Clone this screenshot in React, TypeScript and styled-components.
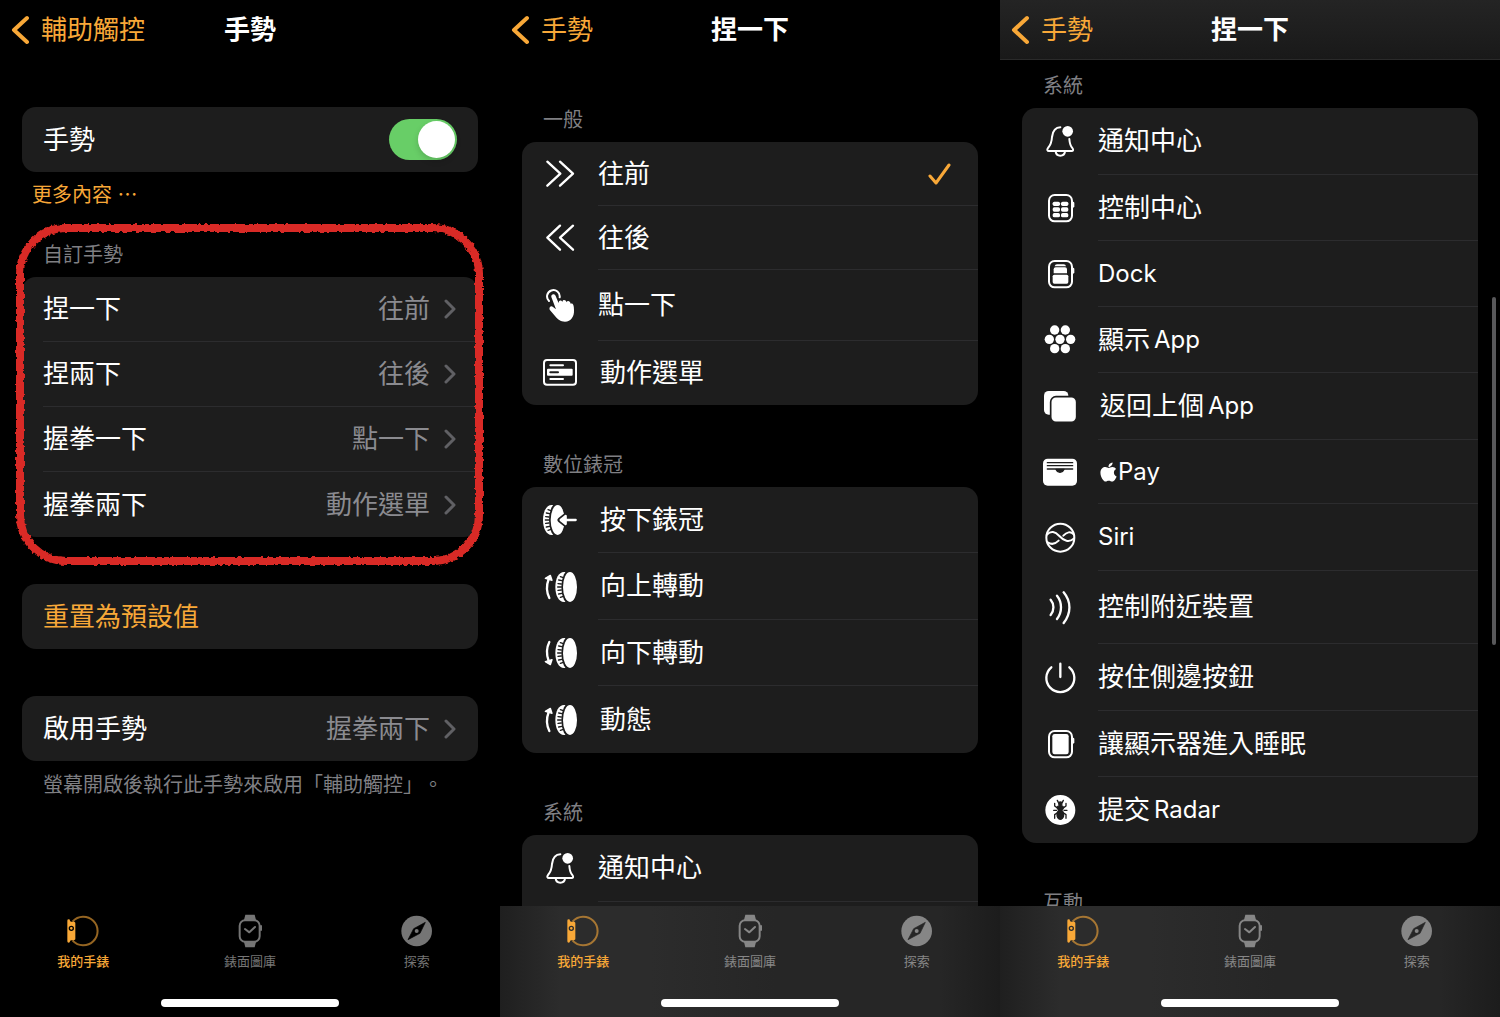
import React, { useState } from "react";
import styled, { createGlobalStyle, css } from "styled-components";
import { FaApple } from "react-icons/fa";

const color = {
  accent: "#f8a838",
  card: "#1d1d1d",
  line: "#2c2c2e",
  muted: "#8b8b90",
  label: "#7f7f83",
  chevron: "#606064",
  green: "#68ce67",
  mark: "#d92b25",
};

const GlobalStyle = createGlobalStyle`
  * { box-sizing: border-box; }
  body {
    margin: 0;
    background: #000;
    color: #fff;
    font-family: Inter, "Noto Sans CJK TC", sans-serif;
    font-size: 26px;
    line-height: 36px;
    text-spacing-trim: space-all;
  }
  button {
    font: inherit;
    color: inherit;
    background: none;
    border: 0;
    padding: 0;
    margin: 0;
    text-align: left;
    cursor: pointer;
  }
  a { color: inherit; text-decoration: none; }
  svg { display: block; flex: none; }
`;

const Screens = styled.main`
  display: grid;
  grid-template-columns: repeat(3, minmax(0, 1fr));
  height: 100vh;
`;

const Phone = styled.section`
  position: relative;
  display: flex;
  flex-direction: column;
  min-height: 0;
  background: #000;
`;

const NavBar = styled.header<{ $raised?: boolean }>`
  flex: none;
  display: grid;
  grid-template-columns: 1fr auto 1fr;
  align-items: center;
  height: 60px;
  padding: 0 11px;
  ${(p) =>
    p.$raised &&
    css`
      background: linear-gradient(#242424, #191919);
      border-bottom: 1px solid #2a2a2a;
    `}
`;

const BackLink = styled.a`
  display: flex;
  align-items: center;
  gap: 12px;
  color: ${color.accent};
`;

const Title = styled.h1`
  margin: 0;
  font-size: 26px;
  line-height: 36px;
  font-weight: 700;
`;

const Content = styled.div<{ $top: number }>`
  flex: 1;
  min-height: 0;
  overflow: hidden;
  padding: ${(p) => p.$top}px 22px 0;
`;

const Card = styled.div<{ $continued?: boolean }>`
  background: ${color.card};
  border-radius: 14px;
  overflow: hidden;
  padding-bottom: ${(p) => (p.$continued ? 40 : 0)}px;
`;

const Spaced = styled.div`
  margin-top: 47px;
`;

const GroupLabel = styled.h2<{ $gap?: number }>`
  margin: ${(p) => p.$gap ?? 46}px 0 8px;
  padding-left: 21px;
  font-size: 20px;
  line-height: 28px;
  font-weight: 400;
  color: ${color.label};
`;

const MoreLink = styled.a`
  display: block;
  width: max-content;
  margin: 9px 0 0 10px;
  font-size: 20px;
  line-height: 28px;
  color: ${color.accent};
`;

const Note = styled.p`
  margin: 10px 0 0;
  padding-left: 21px;
  font-size: 20px;
  line-height: 28px;
  color: ${color.label};
  white-space: nowrap;
`;

const settingRow = css`
  display: flex;
  align-items: center;
  width: 100%;
  height: 65px;
  padding-left: 21px;
`;

const ToggleRow = styled.label`
  ${settingRow}
  justify-content: space-between;
  padding-right: 21px;
`;

const SettingButton = styled.button<{ $accent?: boolean }>`
  ${settingRow}
  color: ${(p) => (p.$accent ? color.accent : "#fff")};
`;

const SettingBody = styled.span`
  flex: 1;
  display: flex;
  align-items: center;
  justify-content: space-between;
  height: 100%;
  padding-right: 21px;
  border-bottom: 1px solid ${color.line};
  button:last-child > & {
    border-bottom: 0;
  }
`;

const Value = styled.span`
  display: flex;
  align-items: center;
  gap: 13px;
  color: ${color.muted};
`;

const Switch = styled.input`
  appearance: none;
  flex: none;
  width: 68px;
  height: 41px;
  margin: 0;
  padding: 2px;
  border-radius: 21px;
  background: #39393d;
  cursor: pointer;
  &::before {
    content: "";
    display: block;
    width: 37px;
    height: 37px;
    border-radius: 50%;
    background: #fff;
    box-shadow: 0 3px 6px rgba(0, 0, 0, 0.15);
  }
  &:checked {
    background: ${color.green};
  }
  &:checked::before {
    margin-left: 27px;
  }
`;

const Marked = styled.section`
  position: relative;
  margin-top: 32px;
`;

const MarkSvg = styled.svg`
  position: absolute;
  inset: -21px -10px -32px;
  width: calc(100% + 20px);
  height: calc(100% + 53px);
  overflow: visible;
  pointer-events: none;
  rect {
    width: calc(100% - 17px);
    height: calc(100% - 16px);
  }
`;

const OptionRow = styled.button<{ $height: number }>`
  display: flex;
  align-items: center;
  width: 100%;
  height: ${(p) => p.$height}px;
  padding-left: 21px;
`;

const IconSlot = styled.span`
  width: 55px;
`;

const OptionBody = styled.span<{ $wide?: boolean; $divider: boolean }>`
  flex: 1;
  display: flex;
  align-items: center;
  justify-content: space-between;
  height: 100%;
  padding: 0 27px 0 ${(p) => (p.$wide ? 2 : 0)}px;
  border-bottom: ${(p) => (p.$divider ? `1px solid ${color.line}` : 0)};
`;

const OptionText = styled.span`
  display: flex;
  align-items: center;
  gap: 4px;
`;

const Latin = styled.span`
  font-size: 24px;
`;

const PayMark = styled.span`
  display: flex;
  align-items: center;
  gap: 1px;
  font-size: 24px;
  svg {
    width: 17px;
    height: 22px;
  }
`;

const TabBar = styled.footer<{ $raised?: boolean }>`
  flex: none;
  display: flex;
  flex-direction: column;
  align-items: center;
  justify-content: space-between;
  height: 111px;
  padding: 8px 0 10px;
  background: ${(p) =>
    p.$raised
      ? "linear-gradient(90deg, #1f1f1f 0, #2c2c2c 12%, #2c2c2c 30%, #262626 55%, #262626 88%, #1c1c1c 100%)"
      : "#000"};
`;

const Tabs = styled.nav`
  display: grid;
  grid-template-columns: repeat(3, 1fr);
  width: 100%;
`;

const Tab = styled.button<{ $active?: boolean; $raised?: boolean }>`
  display: flex;
  flex-direction: column;
  align-items: center;
  gap: 3px;
  font-size: 13px;
  line-height: 20px;
  font-weight: ${(p) => (p.$active ? 500 : 400)};
  color: ${(p) => (p.$active ? color.accent : p.$raised ? "#868686" : "#757575")};
`;

const HomeIndicator = styled.div`
  width: 178px;
  height: 8px;
  border-radius: 4px;
  background: #fff;
`;

const ScrollThumb = styled.div`
  position: absolute;
  top: 297px;
  right: 4px;
  width: 4px;
  height: 348px;
  border-radius: 2px;
  background: #58585a;
`;

/* ---------- icons: a 102-unit square shown at 34px ---------- */

const Glyph = ({ children }: { children: React.ReactNode }) => (
  <svg
    width="34"
    height="34"
    viewBox="0 0 102 102"
    fill="none"
    stroke="#fff"
    strokeWidth="7"
    strokeLinecap="round"
    strokeLinejoin="round"
    aria-hidden="true"
  >
    {children}
  </svg>
);

const Forward = () => (
  <Glyph>
    <path d="M13 14L52 50L13 86M51 14L90 50L51 86" />
  </Glyph>
);

const Backward = () => (
  <Glyph>
    <path d="M51 14L13 50L51 86M90 14L51 50L90 86" />
  </Glyph>
);

const TapHand = () => (
  <Glyph>
    <path d="M18 36A19 19 0 1 1 50 25" strokeWidth="6" />
    <path
      fill="#fff"
      stroke="none"
      d="M25 24C23 15 35 12 38 21L47 43C46 34 54 31 58 39C59 31 68 31 71 40C73 34 81 35 83 44C90 41 93 49 93 63C94 83 84 98 66 98C52 98 44 91 36 81L20 62C17 54 25 49 30 54L39 61Z"
    />
  </Glyph>
);

const ActionMenu = () => (
  <Glyph>
    <rect x="3" y="12" width="96" height="74" rx="9" strokeWidth="6" />
    <path d="M22 28H60M22 69H60" strokeWidth="6" />
    <rect x="12" y="38" width="77" height="21" rx="3" fill="#fff" stroke="none" />
    <path d="M22 49H45" stroke={color.card} strokeWidth="6" />
  </Glyph>
);

const CrownBody = ({ x }: { x: number }) => (
  <g transform={`translate(${x} 0)`} stroke="none">
    <path d="M26 6C10 6 0 26 0 51C0 76 10 96 26 96H36V6Z" fill="#fff" />
    <ellipse cx="44" cy="51" rx="26" ry="53" fill={color.card} />
    <path
      d="M15 20L24 23M10 30L20 32M8 41L18 42M7 51L18 51M8 61L18 60M10 72L20 70M15 82L24 79"
      stroke={color.card}
      strokeWidth="4"
    />
    <ellipse cx="44" cy="51" rx="21" ry="45" fill="#fff" />
  </g>
);

const CrownPress = () => (
  <Glyph>
    <CrownBody x={0} />
    <path d="M51 51L70 36V66ZM68 51H98" stroke={color.card} strokeWidth="15" />
    <path d="M53 51L68 39V63Z" fill="#fff" />
    <path d="M66 51H98" strokeWidth="7" />
  </Glyph>
);

const CrownTurn = ({ down }: { down?: boolean }) => (
  <Glyph>
    <CrownBody x={37} />
    <g transform={down ? "translate(0 102) scale(1 -1)" : undefined}>
      <path d="M19 84C10 66 10 46 17 27" />
      <path d="M7 25L22 16L27 31Z" fill="#fff" strokeWidth="4" />
    </g>
  </Glyph>
);

const CrownUp = () => <CrownTurn />;
const CrownDown = () => <CrownTurn down />;

const Bell = () => (
  <Glyph>
    <path
      d="M52 7C36 7 29 21 27 36C26 54 23 60 15 69C11 74 13 78 18 78H85C91 78 92 74 88 69C81 61 80 56 79 42"
      strokeWidth="6"
    />
    <path d="M38 80C40 96 64 96 66 80" strokeWidth="6" />
    <circle cx="74" cy="19" r="20" fill={color.card} stroke="none" />
    <circle cx="74" cy="19" r="16" fill="#fff" stroke="none" />
  </Glyph>
);

const WatchFrame = ({ children }: { children: React.ReactNode }) => (
  <Glyph>
    <rect x="18" y="12" width="69" height="79" rx="17" strokeWidth="6" />
    <path d="M90 36V46" strokeWidth="8" />
    <g fill="#fff" stroke="none">
      {children}
    </g>
  </Glyph>
);

const ControlCenter = () => (
  <WatchFrame>
    {[32, 49, 66].map((y) => (
      <React.Fragment key={y}>
        <rect x="29" y={y} width="22" height="13" rx="5" />
        <rect x="54" y={y} width="22" height="13" rx="5" />
      </React.Fragment>
    ))}
  </WatchFrame>
);

const DockIcon = () => (
  <WatchFrame>
    <path d="M35 28Q36 22 42 22H62Q68 22 69 28Z" />
    <path d="M32 49V37Q32 31 38 31H66Q72 31 72 37V49Z" />
    <rect x="29" y="53" width="47" height="27" rx="5" />
  </WatchFrame>
);

const DisplaySleep = () => (
  <WatchFrame>
    <rect x="28" y="21" width="49" height="61" rx="7" />
  </WatchFrame>
);

const AppGrid = () => (
  <Glyph>
    <g fill="#fff" stroke="none">
      {[[35, 21], [67, 21], [19, 49], [51, 49], [83, 49], [35, 77], [67, 77]].map(([x, y]) => (
        <circle key={`${x}-${y}`} cx={x} cy={y} r="14" />
      ))}
    </g>
  </Glyph>
);

const PreviousApp = () => (
  <Glyph>
    <rect x="3" y="3" width="73" height="71" rx="14" fill="#fff" stroke="none" />
    <rect x="23" y="20" width="78" height="77" rx="16" fill="#fff" stroke={color.card} strokeWidth="5" />
  </Glyph>
);

const Wallet = () => (
  <Glyph>
    <rect x="0" y="11" width="102" height="81" rx="14" fill="#fff" stroke="none" />
    <g stroke={color.card} strokeWidth="4">
      <path d="M13 23H89M13 32H89M13 42H89" />
      <path d="M39 43Q42 51 51 52Q60 51 63 43Z" fill={color.card} />
    </g>
  </Glyph>
);

const SiriIcon = () => (
  <Glyph>
    <circle cx="52" cy="50" r="42" strokeWidth="6" />
    <path
      d="M12 41C24 28 36 32 49 45C62 59 78 67 93 52M14 64C26 72 37 69 47 59M61 44C71 33 83 30 92 40"
      strokeWidth="6"
    />
  </Glyph>
);

const Nearby = () => (
  <Glyph>
    <path d="M23 26C34 39 34 59 23 72M42 14C58 34 58 64 42 84M62 4C85 32 85 66 62 96" />
  </Glyph>
);

const Power = () => (
  <Glyph>
    <path d="M25 19A42 42 0 1 0 79 19M52 8V48" />
  </Glyph>
);

const Radar = () => (
  <Glyph>
    <circle cx="52" cy="51" r="45" fill="#fff" stroke="none" />
    <g stroke={color.card} strokeWidth="4">
      <ellipse cx="52" cy="65" rx="10" ry="14" fill={color.card} />
      <ellipse cx="52" cy="44" rx="9" ry="6" fill={color.card} />
      <circle cx="52" cy="32" r="5" fill={color.card} />
      <path d="M46 28L43 22M58 28L61 22M42 44L35 39V31M62 44L69 39V31M41 52H32M63 52H72M42 60L35 65V76M62 60L69 65V76" />
    </g>
  </Glyph>
);

const BackChevron = () => (
  <svg width="18" height="30" viewBox="0 0 18 30" fill="none" aria-hidden="true">
    <path d="M16 3L3 15L16 27" stroke={color.accent} strokeWidth="4" strokeLinecap="round" strokeLinejoin="round" />
  </svg>
);

const RowChevron = () => (
  <svg width="14" height="20" viewBox="0 0 14 20" fill="none" aria-hidden="true">
    <path d="M3 2L11 10L3 18" stroke={color.chevron} strokeWidth="3" strokeLinecap="round" strokeLinejoin="round" />
  </svg>
);

const Check = () => (
  <svg width="24" height="24" viewBox="0 0 24 24" fill="none" aria-label="已選取">
    <path d="M3 14L9 21L22 3" stroke={color.accent} strokeWidth="3" strokeLinecap="round" strokeLinejoin="round" />
  </svg>
);

const TabGlyph = ({ children }: { children: React.ReactNode }) => (
  <svg width="34" height="34" viewBox="0 0 102 102" fill="none" aria-hidden="true">
    {children}
  </svg>
);

const MyWatch = ({ hole }: { hole: string }) => (
  <TabGlyph>
    <path d="M20 22A43 43 0 1 1 20 80" stroke={color.accent} strokeOpacity="0.6" strokeWidth="6" />
    <path
      d="M4 20Q4 16 8 16Q12 16 12 20Q13 24 18 23Q26 22 28 26V76Q26 80 18 79Q13 78 12 82Q12 86 8 86Q4 86 4 82Z"
      fill={color.accent}
    />
    <circle cx="16" cy="43" r="6" stroke={hole} strokeWidth="4" />
  </TabGlyph>
);

const FaceGallery = ({ hole }: { hole: string }) => (
  <TabGlyph>
    <path d="M37 2H65L70 22H32ZM32 80H70L65 100H37Z" fill="currentColor" />
    <rect x="20" y="19" width="60" height="64" rx="16" fill={hole} stroke="currentColor" strokeWidth="6" />
    <path d="M84 36V48" stroke="currentColor" strokeWidth="6" strokeLinecap="round" />
    <path d="M36 45L49 55L66 39" stroke="currentColor" strokeWidth="6" strokeLinecap="round" strokeLinejoin="round" />
  </TabGlyph>
);

const Compass = ({ hole }: { hole: string }) => (
  <TabGlyph>
    <circle cx="50" cy="51" r="46" fill="currentColor" />
    <path d="M76 25L60 58L24 77L41 44Z" fill={hole} stroke={hole} strokeWidth="2" strokeLinejoin="round" />
    <circle cx="50" cy="51" r="6" fill="currentColor" />
  </TabGlyph>
);

/* ---------- shared parts ---------- */

const Header = ({ back, title, raised }: { back: string; title: string; raised?: boolean }) => (
  <NavBar $raised={raised}>
    <BackLink href="#">
      <BackChevron />
      {back}
    </BackLink>
    <Title>{title}</Title>
  </NavBar>
);

const Footer = ({ raised }: { raised?: boolean }) => (
  <TabBar $raised={raised}>
    <Tabs>
      <Tab $active $raised={raised}>
        <MyWatch hole={raised ? "#2c2c2c" : "#000"} />
        我的手錶
      </Tab>
      <Tab $raised={raised}>
        <FaceGallery hole={raised ? "#272727" : "#000"} />
        錶面圖庫
      </Tab>
      <Tab $raised={raised}>
        <Compass hole={raised ? "#262626" : "#000"} />
        探索
      </Tab>
    </Tabs>
    <HomeIndicator />
  </TabBar>
);

const Setting = ({ name, value }: { name: string; value: string }) => (
  <SettingButton>
    <SettingBody>
      {name}
      <Value>
        {value}
        <RowChevron />
      </Value>
    </SettingBody>
  </SettingButton>
);

type Option = {
  id: string;
  icon: React.ComponentType;
  text?: string;
  latin?: string;
  pay?: boolean;
  wide?: boolean;
  height: number;
};

const general: Option[] = [
  { id: "forward", icon: Forward, text: "往前", height: 64 },
  { id: "backward", icon: Backward, text: "往後", height: 64 },
  { id: "tap", icon: TapHand, text: "點一下", height: 71 },
  { id: "menu", icon: ActionMenu, text: "動作選單", wide: true, height: 64 },
];

const crown: Option[] = [
  { id: "press", icon: CrownPress, text: "按下錶冠", wide: true, height: 66 },
  { id: "up", icon: CrownUp, text: "向上轉動", wide: true, height: 67 },
  { id: "down", icon: CrownDown, text: "向下轉動", wide: true, height: 66 },
  { id: "motion", icon: CrownUp, text: "動態", wide: true, height: 67 },
];

const system: Option[] = [
  { id: "notifications", icon: Bell, text: "通知中心", height: 67 },
  { id: "control", icon: ControlCenter, text: "控制中心", height: 66 },
  { id: "dock", icon: DockIcon, latin: "Dock", height: 66 },
  { id: "apps", icon: AppGrid, text: "顯示", latin: "App", height: 66 },
  { id: "previous", icon: PreviousApp, text: "返回上個", latin: "App", wide: true, height: 67 },
  { id: "pay", icon: Wallet, pay: true, wide: true, height: 64 },
  { id: "siri", icon: SiriIcon, latin: "Siri", height: 67 },
  { id: "nearby", icon: Nearby, text: "控制附近裝置", height: 73 },
  { id: "side", icon: Power, text: "按住側邊按鈕", height: 67 },
  { id: "sleep", icon: DisplaySleep, text: "讓顯示器進入睡眠", height: 66 },
  { id: "radar", icon: Radar, text: "提交", latin: "Radar", height: 66 },
];

type OptionListProps = {
  options: Option[];
  selected?: string;
  onSelect?: (id: string) => void;
  continued?: boolean;
};

const OptionList = ({ options, selected, onSelect, continued }: OptionListProps) => (
  <Card $continued={continued}>
    {options.map(({ id, icon: Icon, text, latin, pay, wide, height }, i) => (
      <OptionRow key={id} $height={height} aria-pressed={selected === id} onClick={() => onSelect?.(id)}>
        <IconSlot>
          <Icon />
        </IconSlot>
        <OptionBody $wide={wide} $divider={continued || i < options.length - 1}>
          <OptionText>
            {text && <span>{text}</span>}
            {latin && <Latin>{latin}</Latin>}
            {pay && (
              <PayMark>
                <FaApple aria-label="Apple" />
                Pay
              </PayMark>
            )}
          </OptionText>
          {selected === id && <Check />}
        </OptionBody>
      </OptionRow>
    ))}
  </Card>
);

const PenMark = () => (
  <MarkSvg aria-hidden="true">
    <defs>
      <filter id="crayon" x="-5%" y="-5%" width="110%" height="110%">
        <feTurbulence type="fractalNoise" baseFrequency="0.27" numOctaves="2" seed="7" />
        <feDisplacementMap in="SourceGraphic" scale="4" xChannelSelector="R" yChannelSelector="G" />
      </filter>
    </defs>
    <rect x="8" y="8" rx="46" fill="none" stroke={color.mark} strokeWidth="8" filter="url(#crayon)" />
  </MarkSvg>
);

export default function App() {
  const [enabled, setEnabled] = useState(true);
  const [choice, setChoice] = useState("forward");

  return (
    <>
      <GlobalStyle />
      <Screens lang="zh-Hant">
        <Phone>
          <Header back="輔助觸控" title="手勢" />
          <Content $top={47}>
            <Card>
              <ToggleRow>
                手勢
                <Switch type="checkbox" checked={enabled} onChange={(e) => setEnabled(e.target.checked)} />
              </ToggleRow>
            </Card>
            <MoreLink href="#">更多內容 ⋯</MoreLink>
            <Marked>
              <GroupLabel $gap={0}>自訂手勢</GroupLabel>
              <Card>
                <Setting name="捏一下" value="往前" />
                <Setting name="捏兩下" value="往後" />
                <Setting name="握拳一下" value="點一下" />
                <Setting name="握拳兩下" value="動作選單" />
              </Card>
              <PenMark />
            </Marked>
            <Spaced>
              <Card>
                <SettingButton $accent>重置為預設值</SettingButton>
              </Card>
            </Spaced>
            <Spaced>
              <Card>
                <Setting name="啟用手勢" value="握拳兩下" />
              </Card>
            </Spaced>
            <Note>螢幕開啟後執行此手勢來啟用「輔助觸控」。</Note>
          </Content>
          <Footer />
        </Phone>

        <Phone>
          <Header back="手勢" title="捏一下" />
          <Content $top={0}>
            <GroupLabel>一般</GroupLabel>
            <OptionList options={general} selected={choice} onSelect={setChoice} />
            <GroupLabel>數位錶冠</GroupLabel>
            <OptionList options={crown} selected={choice} onSelect={setChoice} />
            <GroupLabel>系統</GroupLabel>
            <OptionList options={system.slice(0, 1)} selected={choice} onSelect={setChoice} continued />
          </Content>
          <Footer raised />
        </Phone>

        <Phone>
          <Header back="手勢" title="捏一下" raised />
          <Content $top={12}>
            <GroupLabel $gap={0}>系統</GroupLabel>
            <OptionList options={system} />
            <GroupLabel>互動</GroupLabel>
          </Content>
          <ScrollThumb />
          <Footer raised />
        </Phone>
      </Screens>
    </>
  );
}
